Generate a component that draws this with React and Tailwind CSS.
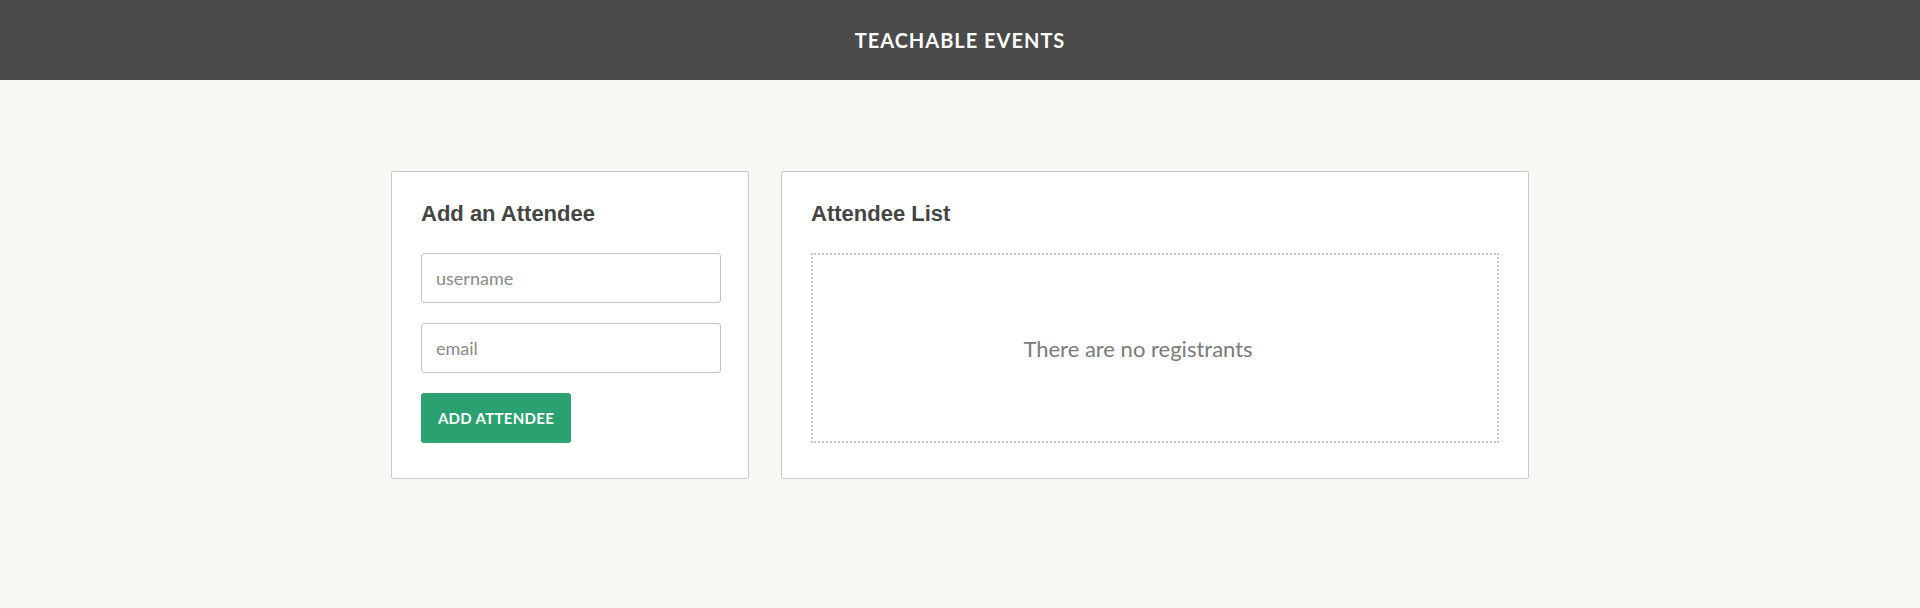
import React from "react";

export default function App() {
  return (
    <div className="min-h-[608px] bg-[#f8f8f4]" style={{ fontFamily: "Lato, 'Liberation Sans', sans-serif" }}>
      <header className="h-[80px] bg-[#4a4a4a] flex items-center justify-center">
        <h1 className="text-white font-bold text-[20px] tracking-[1px] leading-none">TEACHABLE EVENTS</h1>
      </header>
      <main className="flex justify-center items-start gap-[32px] pt-[91px]">
        <section className="w-[358px] h-[308px] bg-white border border-[#c8c8c8] rounded-[2px] px-[29px] pt-[29px]">
          <h2 className="text-[22px] font-bold text-[#444] leading-[26px] mb-[26px]" style={{ fontFamily: "'Liberation Sans', Arial, sans-serif" }}>
            Add an Attendee
          </h2>
          <form className="flex flex-col gap-[20px]" onSubmit={(e) => e.preventDefault()}>
            <input
              type="text"
              placeholder="username"
              className="w-[300px] h-[50px] border border-[#c4c4c4] rounded-[3px] px-[14px] text-[18px] text-[#333] placeholder:text-[#8a8a8a] outline-none bg-white"
            />
            <input
              type="email"
              placeholder="email"
              className="w-[300px] h-[50px] border border-[#c4c4c4] rounded-[3px] px-[14px] text-[18px] text-[#333] placeholder:text-[#8a8a8a] outline-none bg-white"
            />
            <button
              type="submit"
              className="w-[150px] h-[50px] bg-[#2ba171] text-white font-bold text-[15px] rounded-[3px] tracking-[0.3px]"
            >
              ADD ATTENDEE
            </button>
          </form>
        </section>
        <section className="w-[748px] h-[308px] bg-white border border-[#c8c8c8] rounded-[2px] px-[29px] pt-[29px]">
          <h2 className="text-[22px] font-bold text-[#444] leading-[26px] mb-[26px]" style={{ fontFamily: "'Liberation Sans', Arial, sans-serif" }}>
            Attendee List
          </h2>
          <div className="h-[190px] border-2 border-dotted border-[#c4c4c4] flex items-center justify-center pr-[34px]">
            <p className="text-[22px] text-[#7a7a7a]">There are no registrants</p>
          </div>
        </section>
      </main>
    </div>
  );
}
